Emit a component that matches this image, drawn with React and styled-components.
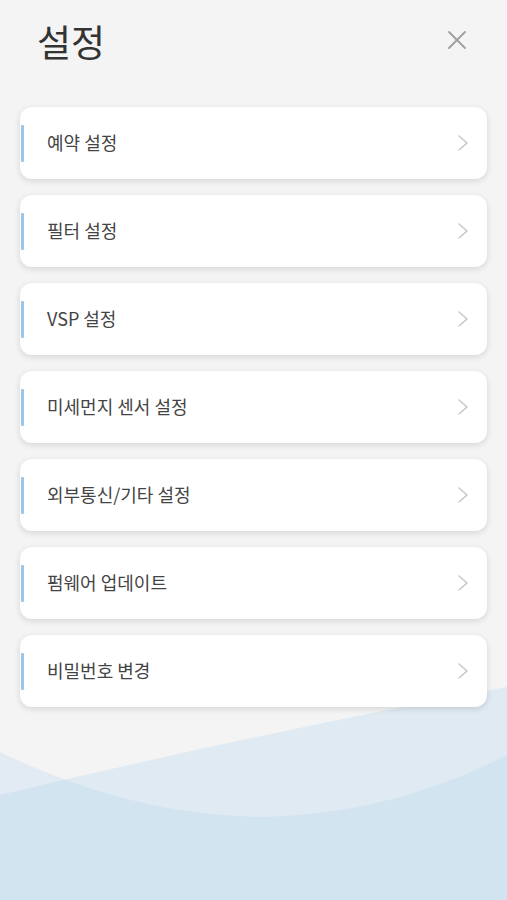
import React from 'react';
import styled, { createGlobalStyle } from 'styled-components';

const GlobalStyle = createGlobalStyle`
  html, body {
    margin: 0;
    padding: 0;
    background: #f4f4f4;
    font-family: "Noto Sans CJK KR", "Noto Sans", sans-serif;
  }
`;

const menuItems = [
  '예약 설정',
  '필터 설정',
  'VSP 설정',
  '미세먼지 센서 설정',
  '외부통신/기타 설정',
  '펌웨어 업데이트',
  '비밀번호 변경',
];

const Settings = () => {
  return (
    <Page>
      <GlobalStyle />
      <Waves viewBox='0 0 507 220' preserveAspectRatio='none'>
        <path d='M0 115 Q 250 55 507 7 L507 220 L0 220 Z' fill='rgba(178, 212, 240, 0.3)' />
        <path d='M0 72 Q 130 135 260 137 Q 390 135 507 75 L507 220 L0 220 Z' fill='rgba(178, 212, 240, 0.28)' />
      </Waves>

      <Header>
        <Title>설정</Title>
        <CloseButton aria-label='close'>
          <svg width='20' height='20' viewBox='0 0 20 20'>
            <path d='M2 2 L18 18 M18 2 L2 18' stroke='#9e9e9e' strokeWidth='1.8' strokeLinecap='round' />
          </svg>
        </CloseButton>
      </Header>

      <List>
        {menuItems.map((label) => (
          <Card key={label}>
            <Accent />
            <Label>{label}</Label>
            <Chevron viewBox='0 0 12 18'>
              <path d='M2 2 L10 9 L2 16' fill='none' stroke='#c8c8c8' strokeWidth='1.6' strokeLinecap='round' strokeLinejoin='round' />
            </Chevron>
          </Card>
        ))}
      </List>
    </Page>
  );
};

const Page = styled.div`
  position: relative;
  min-height: 900px;
  overflow: hidden;
`;

const Waves = styled.svg`
  position: absolute;
  left: 0;
  bottom: 0;
  width: 100%;
  height: 220px;
  z-index: 0;
`;

const Header = styled.header`
  position: relative;
  z-index: 1;
  display: flex;
  align-items: center;
  justify-content: space-between;
  padding: 10px 40px 0 37px;
  height: 62px;
`;

const Title = styled.h1`
  margin: 0;
  font-size: 37px;
  font-weight: 400;
  color: #333333;
`;

const CloseButton = styled.button`
  display: flex;
  align-items: center;
  justify-content: center;
  padding: 0;
  border: none;
  background: none;
  cursor: pointer;
  margin-top: -2px;
`;

const List = styled.div`
  position: relative;
  z-index: 1;
  display: flex;
  flex-direction: column;
  gap: 16px;
  padding: 35px 20px 0 20px;
`;

const Card = styled.div`
  display: flex;
  align-items: center;
  height: 72px;
  background: #ffffff;
  border-radius: 12px;
  box-shadow: 0 2px 6px rgba(0, 0, 0, 0.13);
  padding-left: 1px;
  padding-right: 18px;
  cursor: pointer;
`;

const Accent = styled.span`
  width: 3px;
  height: 37px;
  border-radius: 1px;
  background: #9cc5ea;
`;

const Label = styled.span`
  flex: 1;
  margin-left: 23px;
  margin-top: -2px;
  font-size: 18px;
  color: #444444;
`;

const Chevron = styled.svg`
  width: 12px;
  height: 18px;
`;

export default Settings;
